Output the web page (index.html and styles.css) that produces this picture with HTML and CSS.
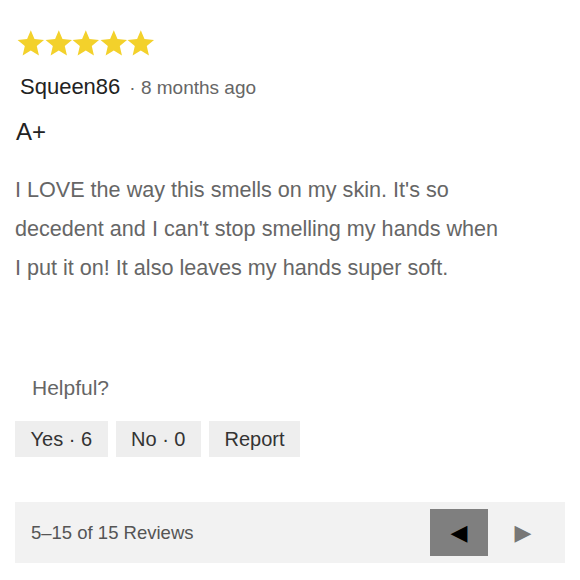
FILE: index.html
```html
<!DOCTYPE html>
<html lang="en">
<head>
  <meta charset="UTF-8" />
  <meta name="viewport" content="width=device-width, initial-scale=1.0"/>
  <title>Review</title>
  <link rel="stylesheet" href="styles.css">
</head>
<body>

  <!-- Single review -->
  <div class="review">
    <div class="stars">
      <svg viewBox="0 0 24 24"><path d="M12 1l3.2 7.6 8.3.7-6.3 5.4 1.9 8.1L12 18.5l-7.1 4.3 1.9-8.1L.5 9.3l8.3-.7z"/></svg>
      <svg viewBox="0 0 24 24"><path d="M12 1l3.2 7.6 8.3.7-6.3 5.4 1.9 8.1L12 18.5l-7.1 4.3 1.9-8.1L.5 9.3l8.3-.7z"/></svg>
      <svg viewBox="0 0 24 24"><path d="M12 1l3.2 7.6 8.3.7-6.3 5.4 1.9 8.1L12 18.5l-7.1 4.3 1.9-8.1L.5 9.3l8.3-.7z"/></svg>
      <svg viewBox="0 0 24 24"><path d="M12 1l3.2 7.6 8.3.7-6.3 5.4 1.9 8.1L12 18.5l-7.1 4.3 1.9-8.1L.5 9.3l8.3-.7z"/></svg>
      <svg viewBox="0 0 24 24"><path d="M12 1l3.2 7.6 8.3.7-6.3 5.4 1.9 8.1L12 18.5l-7.1 4.3 1.9-8.1L.5 9.3l8.3-.7z"/></svg>
    </div>

    <div class="meta">
      <span class="author">Squeen86</span>
      <span class="date">· 8 months ago</span>
    </div>

    <h3 class="title">A+</h3>

    <p class="text">I LOVE the way this smells on my skin. It's so decedent and I can't stop smelling my hands when I put it on! It also leaves my hands super soft.</p>

    <div class="helpful">Helpful?</div>
    <div class="actions">
      <button>Yes · 6</button>
      <button>No · 0</button>
      <button>Report</button>
    </div>
  </div>

  <!-- Pagination -->
  <div class="pager">
    <span class="count">5–15 of 15 Reviews</span>
    <div class="arrows">
      <button class="prev">&#9664;</button>
      <button class="next">&#9654;</button>
    </div>
  </div>

</body>
</html>
```

FILE: styles.css
```css
body {
  margin: 0;
  padding: 29px 15px 0 15px;
  font-family: "Liberation Sans", Arial, sans-serif;
  background: #fff;
  color: #222;
}

.stars {
  display: flex;
  margin-left: 2px;
}

.stars svg {
  width: 27.6px;
  height: 28px;
  fill: #f3d12b;
}

.meta {
  margin-top: 17px;
  margin-left: 5px;
  display: flex;
  align-items: baseline;
  gap: 9px;
}

.author {
  font-size: 22px;
  color: #222;
}

.date {
  font-size: 19px;
  color: #666;
}

.title {
  margin: 18px 0 0 1px;
  font-size: 24px;
  font-weight: normal;
  color: #222;
}

.text {
  margin: 24px 0 0 0;
  max-width: 488px;
  font-size: 21.6px;
  line-height: 39px;
  color: #666;
}

.helpful {
  margin: 89px 0 0 17px;
  font-size: 21px;
  color: #666;
}

.actions {
  display: flex;
  gap: 8px;
  margin-top: 21px;
}

.actions button {
  font-family: inherit;
  font-size: 20px;
  color: #333;
  background: #eeeeee;
  border: none;
  height: 36px;
  padding: 0 15.5px;
}

.pager {
  margin-top: 45px;
  height: 61px;
  background: #f2f2f2;
  display: flex;
  align-items: center;
  justify-content: space-between;
  padding-left: 16px;
}

.count {
  font-size: 18.5px;
  color: #555;
}

.arrows {
  display: flex;
  align-items: center;
  gap: 6px;
  margin-right: 13px;
}

.arrows button {
  border: none;
  width: 58px;
  height: 47px;
  font-size: 22px;
  font-family: "DejaVu Sans", sans-serif;
  padding: 0;
}

.prev {
  background: #7f7f7f;
  color: #000;
}

.next {
  background: transparent;
  color: #777;
}
```
